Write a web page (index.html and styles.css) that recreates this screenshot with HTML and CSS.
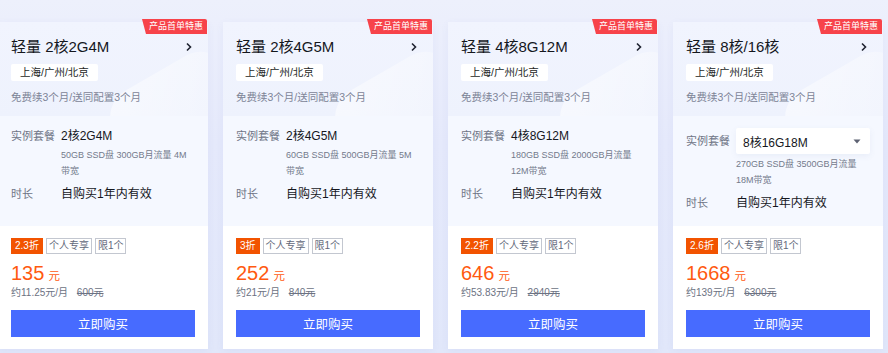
FILE: index.html
```html
<!DOCTYPE html>
<html lang="zh-CN">
<head>
<meta charset="utf-8">
<title>轻量应用服务器</title>
<link rel="stylesheet" href="styles.css">
</head>
<body>
<div class="list">
  <div class="card">
    <div class="badge">产品首单特惠</div>
    <div class="head">
      <div class="title-row"><span class="title">轻量 2核2G4M</span><svg class="chev" width="8" height="10" viewBox="0 0 8 10"><polyline points="2,1.5 5.5,5 2,8.5" fill="none" stroke="#1f2330" stroke-width="1.6"/></svg></div>
      <span class="region">上海/广州/北京</span>
      <p class="promo">免费续3个月/送同配置3个月</p>
    </div>
    <div class="spec">
      <div class="row"><span class="lbl">实例套餐</span><div class="val"><div class="main">2核2G4M</div><div class="sub">50GB SSD盘 300GB月流量 4M 带宽</div></div></div>
      <div class="row row-dur"><span class="lbl">时长</span><div class="val"><div class="main">自购买1年内有效</div></div></div>
    </div>
    <div class="foot">
      <div class="tags"><span class="disc">2.3折</span><span class="tag">个人专享</span><span class="tag">限1个</span></div>
      <div class="price"><span class="num">135</span><span class="unit">元</span></div>
      <div class="per">约11.25元/月 <s>600元</s></div>
      <button class="buy">立即购买</button>
    </div>
  </div>

  <div class="card">
    <div class="badge">产品首单特惠</div>
    <div class="head">
      <div class="title-row"><span class="title">轻量 2核4G5M</span><svg class="chev" width="8" height="10" viewBox="0 0 8 10"><polyline points="2,1.5 5.5,5 2,8.5" fill="none" stroke="#1f2330" stroke-width="1.6"/></svg></div>
      <span class="region">上海/广州/北京</span>
      <p class="promo">免费续3个月/送同配置3个月</p>
    </div>
    <div class="spec">
      <div class="row"><span class="lbl">实例套餐</span><div class="val"><div class="main">2核4G5M</div><div class="sub">60GB SSD盘 500GB月流量 5M 带宽</div></div></div>
      <div class="row row-dur"><span class="lbl">时长</span><div class="val"><div class="main">自购买1年内有效</div></div></div>
    </div>
    <div class="foot">
      <div class="tags"><span class="disc">3折</span><span class="tag">个人专享</span><span class="tag">限1个</span></div>
      <div class="price"><span class="num">252</span><span class="unit">元</span></div>
      <div class="per">约21元/月 <s>840元</s></div>
      <button class="buy">立即购买</button>
    </div>
  </div>

  <div class="card">
    <div class="badge">产品首单特惠</div>
    <div class="head">
      <div class="title-row"><span class="title">轻量 4核8G12M</span><svg class="chev" width="8" height="10" viewBox="0 0 8 10"><polyline points="2,1.5 5.5,5 2,8.5" fill="none" stroke="#1f2330" stroke-width="1.6"/></svg></div>
      <span class="region">上海/广州/北京</span>
      <p class="promo">免费续3个月/送同配置3个月</p>
    </div>
    <div class="spec">
      <div class="row"><span class="lbl">实例套餐</span><div class="val"><div class="main">4核8G12M</div><div class="sub">180GB SSD盘 2000GB月流量 12M带宽</div></div></div>
      <div class="row row-dur"><span class="lbl">时长</span><div class="val"><div class="main">自购买1年内有效</div></div></div>
    </div>
    <div class="foot">
      <div class="tags"><span class="disc">2.2折</span><span class="tag">个人专享</span><span class="tag">限1个</span></div>
      <div class="price"><span class="num">646</span><span class="unit">元</span></div>
      <div class="per">约53.83元/月 <s>2940元</s></div>
      <button class="buy">立即购买</button>
    </div>
  </div>

  <div class="card">
    <div class="badge">产品首单特惠</div>
    <div class="head">
      <div class="title-row"><span class="title">轻量 8核/16核</span><svg class="chev" width="8" height="10" viewBox="0 0 8 10"><polyline points="2,1.5 5.5,5 2,8.5" fill="none" stroke="#1f2330" stroke-width="1.6"/></svg></div>
      <span class="region">上海/广州/北京</span>
      <p class="promo">免费续3个月/送同配置3个月</p>
    </div>
    <div class="spec">
      <div class="row row-select"><span class="lbl">实例套餐</span><div class="val"><div class="select"><span>8核16G18M</span><svg width="8" height="5" viewBox="0 0 8 5"><polygon points="0.5,0.5 7.5,0.5 4,4.5" fill="#5d6272"/></svg></div><div class="sub">270GB SSD盘 3500GB月流量 18M带宽</div></div></div>
      <div class="row row-dur"><span class="lbl">时长</span><div class="val"><div class="main">自购买1年内有效</div></div></div>
    </div>
    <div class="foot">
      <div class="tags"><span class="disc">2.6折</span><span class="tag">个人专享</span><span class="tag">限1个</span></div>
      <div class="price"><span class="num">1668</span><span class="unit">元</span></div>
      <div class="per">约139元/月 <s>6300元</s></div>
      <button class="buy">立即购买</button>
    </div>
  </div>
</div>
</body>
</html>
```

FILE: styles.css
```css
* { box-sizing: border-box; }
html, body { margin: 0; padding: 0; }
body {
  width: 888px;
  height: 353px;
  overflow: hidden;
  background: linear-gradient(180deg, #edf0fc 0%, #e5e9fb 40%, #e1e7fa 100%);
  font-family: "Liberation Sans", "Noto Sans CJK SC", sans-serif;
  color: #1b1d24;
}
.list {
  display: grid;
  grid-template-columns: repeat(4, 210px);
  column-gap: 15px;
  margin-left: -2px;
  padding-top: 22px;
}
.card {
  position: relative;
  display: flex;
  flex-direction: column;
  height: 327px;
  background: #fff;
  box-shadow: 0 2px 8px rgba(80, 100, 180, 0.06);
}
.badge {
  position: absolute;
  z-index: 3;
  top: -3px;
  right: 1px;
  height: 15px;
  padding: 0 4px 0 7px;
  background: #f7434a;
  color: #fff;
  font-size: 9px;
  line-height: 15px;
  border-top-right-radius: 2px;
  clip-path: polygon(0 0, 100% 0, 100% 100%, 4px 100%);
}
.head {
  position: relative;
  overflow: hidden;
  padding: 15px 13px 12px;
  background: linear-gradient(180deg, #f1f4fe 0%, #eef2fd 100%);
}
.head::after {
  content: "";
  position: absolute;
  right: -40px;
  bottom: -60px;
  width: 130px;
  height: 110px;
  background: linear-gradient(135deg, rgba(255,255,255,0.55), rgba(255,255,255,0.05));
  transform: rotate(-30deg);
  border-radius: 30px;
}
.title-row {
  position: relative;
  z-index: 1;
  display: flex;
  align-items: center;
  justify-content: space-between;
  height: 20px;
  padding-right: 2px;
}
.title { font-size: 15px; line-height: 20px; color: #15171d; }
.chev { display: block; }
.region {
  position: relative;
  z-index: 1;
  display: inline-block;
  margin-top: 7px;
  height: 17px;
  padding: 0 9px;
  background: #fff;
  border-radius: 2px;
  font-size: 10.5px;
  line-height: 17px;
  color: #1d1f26;
}
.promo {
  position: relative;
  z-index: 1;
  margin: 9px 0 0;
  font-size: 10.5px;
  line-height: 14px;
  color: #7d8497;
}
.spec {
  flex: 1;
  padding: 12px 13px 13px;
  background: #f5f8ff;
}
.row { display: flex; }
.lbl {
  flex: 0 0 50px;
  font-size: 11px;
  line-height: 16px;
  color: #6f7586;
}
.val { flex: 1; min-width: 0; }
.main { font-size: 12px; line-height: 16px; color: #15171d; }
.sub {
  margin-top: 3px;
  font-size: 9px;
  line-height: 16px;
  color: #737a8b;
}
.row-dur { margin-top: 5px; }
.row-dur .lbl, .row-dur .main { line-height: 20px; }
.row-select .lbl { line-height: 26px; }
.row-select .sub { margin-top: 2px; }
.select {
  display: flex;
  align-items: center;
  justify-content: space-between;
  height: 26px;
  padding: 0 9px 0 7px;
  background: #fff;
  border-radius: 2px;
  box-shadow: 0 2px 6px rgba(90, 110, 170, 0.08);
  font-size: 12px;
  color: #15171d;
}
.foot { padding: 12px 13px 12px; background: #fff; }
.tags { display: flex; gap: 3px; height: 16px; }
.disc, .tag {
  height: 16px;
  padding: 0 2px;
  font-size: 10px;
  line-height: 14px;
  border: 1px solid transparent;
}
.disc { background: #f25300; color: #fff; border-color: #f25300; padding: 0 3px; }
.tag { border-color: #c3c7d0; color: #62687a; }
.price { margin-top: 6px; height: 26px; line-height: 26px; color: #ff5a10; }
.num { font-size: 20px; }
.unit { margin-left: 4px; font-size: 11.5px; }
.per { font-size: 10px; line-height: 14px; color: #6c7283; }
.per s { margin-left: 6px; }
.buy {
  display: block;
  width: 100%;
  height: 27px;
  margin-top: 10px;
  border: 0;
  background: #476bff;
  color: #fff;
  font-family: inherit;
  font-size: 12.5px;
  cursor: pointer;
}
```
